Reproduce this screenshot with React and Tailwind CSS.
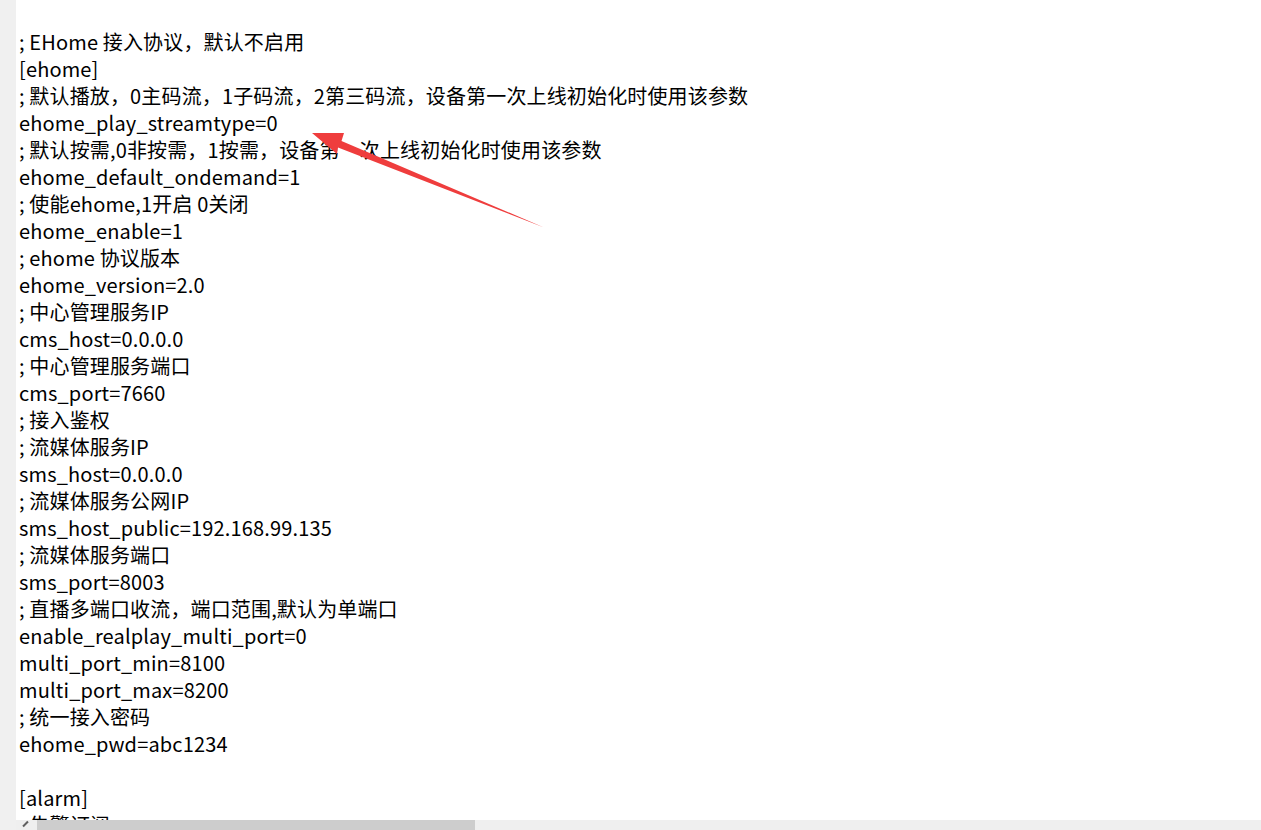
const lines = [
  "; EHome 接入协议，默认不启用",
  "[ehome]",
  "; 默认播放，0主码流，1子码流，2第三码流，设备第一次上线初始化时使用该参数",
  "ehome_play_streamtype=0",
  "HIDDEN",
  "ehome_default_ondemand=1",
  "; 使能ehome,1开启 0关闭",
  "ehome_enable=1",
  "; ehome 协议版本",
  "ehome_version=2.0",
  "; 中心管理服务IP",
  "cms_host=0.0.0.0",
  "; 中心管理服务端口",
  "cms_port=7660",
  "; 接入鉴权",
  "; 流媒体服务IP",
  "sms_host=0.0.0.0",
  "; 流媒体服务公网IP",
  "sms_host_public=192.168.99.135",
  "; 流媒体服务端口",
  "sms_port=8003",
  "; 直播多端口收流，端口范围,默认为单端口",
  "enable_realplay_multi_port=0",
  "multi_port_min=8100",
  "multi_port_max=8200",
  "; 统一接入密码",
  "ehome_pwd=abc1234",
  "",
  "[alarm]",
  "; 告警订阅",
];

function Line({ text }) {
  if (text === "HIDDEN") {
    return (
      <div className="h-[27px] leading-[27px] whitespace-pre">
        ; 默认按需,0非按需，1按需，设备第<span className="text-white">一</span>次上线初始化时使用该参数
      </div>
    );
  }
  return <div className="h-[27px] leading-[27px] whitespace-pre">{text || " "}</div>;
}

function Arrow() {
  return (
    <svg className="absolute left-0 top-0 pointer-events-none" width="1261" height="830">
      <polygon
        points="312,133 344,133 341.5,141 544,227.5 338,147.5 337,154"
        fill="#ef3d3d"
      />
    </svg>
  );
}

export default function App() {
  return (
    <div className="relative w-[1261px] h-[830px] overflow-hidden bg-white flex flex-col">
      <div className="flex flex-1 min-h-0">
        <div className="w-4 bg-[#f0f0f0] shrink-0" />
        <div
          className="flex-1 pl-[3px] pt-[28px] text-[20px] tracking-[0.15px] text-black overflow-hidden"
          style={{ fontFamily: '"Noto Sans CJK SC", "Noto Sans", sans-serif' }}
        >
          {lines.map((t, i) => (
            <Line key={i} text={t} />
          ))}
        </div>
      </div>
      <div className="h-[10px] shrink-0 flex bg-[#efefef]">
        <div className="w-4 bg-[#f0f0f0]" />
        <div className="w-[21px] relative">
          <div className="absolute left-[6px] top-[3px] w-[7px] h-[2px] bg-[#606060] -rotate-45" />
        </div>
        <div className="w-[438px] bg-[#cdcdcd]" />
      </div>
      <Arrow />
    </div>
  );
}
